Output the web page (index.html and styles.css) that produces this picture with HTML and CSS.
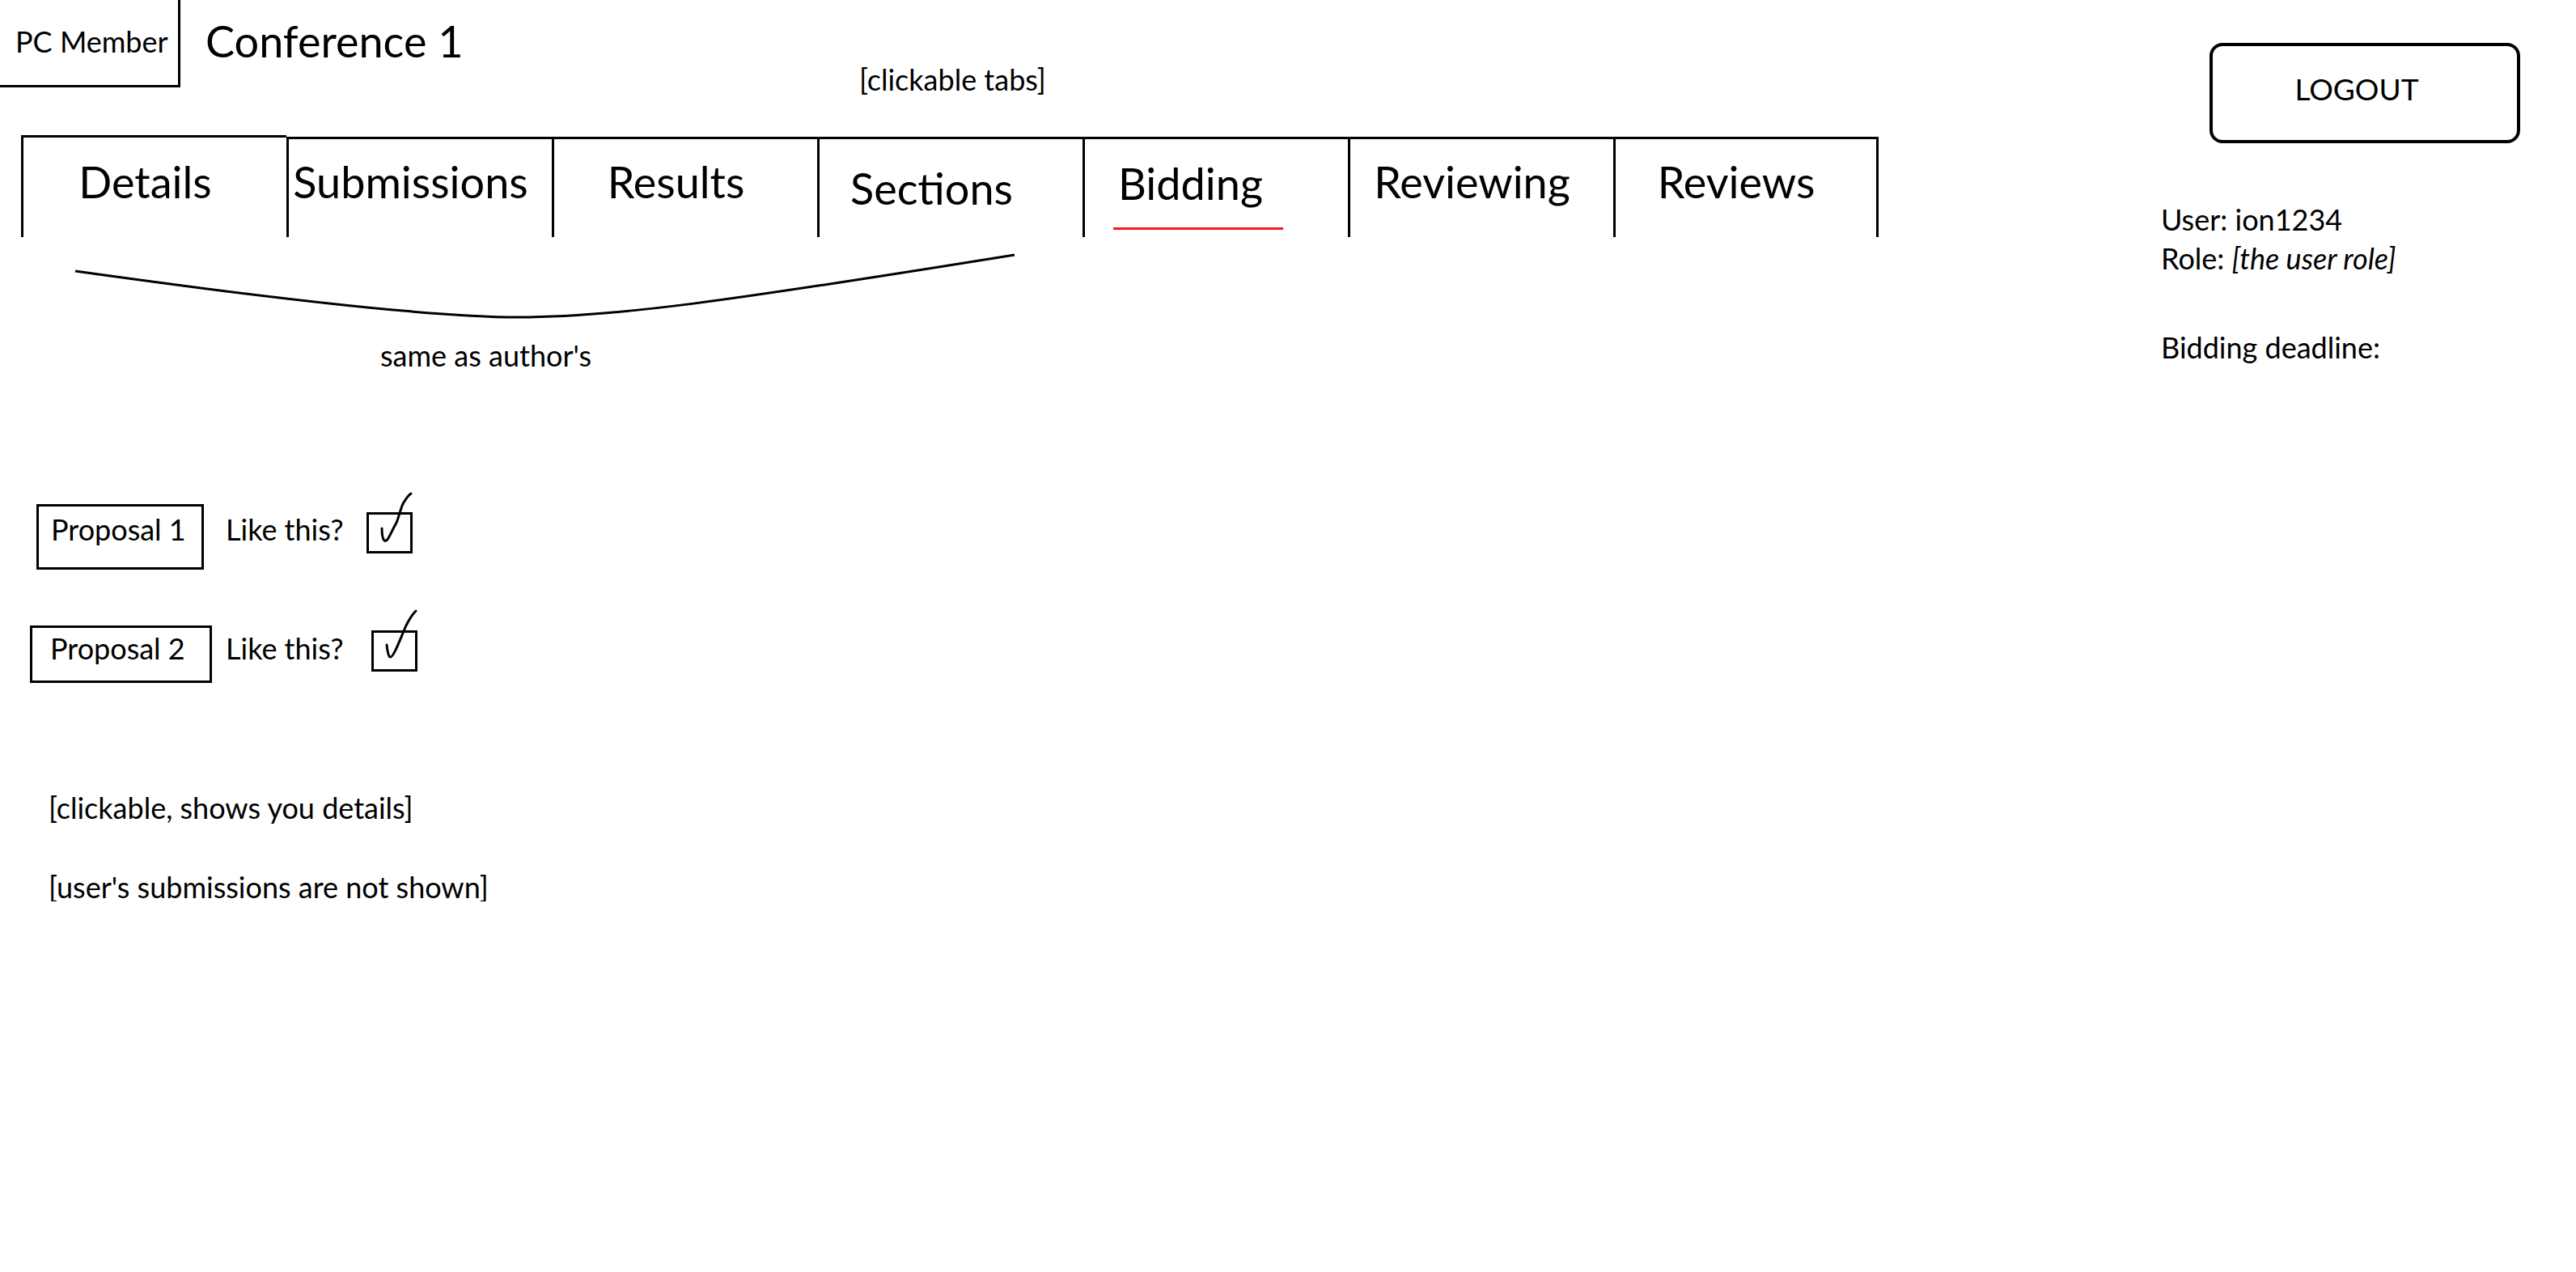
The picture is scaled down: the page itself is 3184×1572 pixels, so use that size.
FILE: index.html
```html
<!DOCTYPE html>
<html lang="en">

<head>
    <meta charset="UTF-8">
    <meta name="viewport" content="width=device-width, initial-scale=1.0">
    <title>Conference 1 - Bidding</title>
    <link rel="stylesheet" href="styles.css">
</head>

<body>
    <div class="page">
        <div class="main">
            <header class="top">
                <div class="role-box">PC Member</div>
                <h1 class="conf">Conference 1</h1>
                <span class="hint">[clickable tabs]</span>
            </header>

            <nav class="tabs">
                <a class="tab" href="#">Details</a>
                <a class="tab" href="#">Submissions</a>
                <a class="tab" href="#">Results</a>
                <a class="tab tab--low" href="#">Sections</a>
                <a class="tab active" href="#">Bidding<span class="mark"></span></a>
                <a class="tab" href="#">Reviewing</a>
                <a class="tab" href="#">Reviews</a>
            </nav>

            <div class="brace">
                <svg width="1300" height="100" viewBox="0 0 1300 100">
                    <path d="M93,35 C400,78 560,92 640,92 C760,92 900,72 1254,15" fill="none" stroke="#000" stroke-width="3" />
                </svg>
                <p>same as author's</p>
            </div>

            <ul class="bids">
                <li class="bid">
                    <a class="proposal" href="#">Proposal 1</a>
                    <span class="like">Like this?</span>
                    <span class="check">
                        <svg width="70" height="80" viewBox="0 0 70 80">
                            <path d="M19,50 C19,58 20,63 22,65 C26,68 30,55 37,43 C41,33 43,22 46,18 C49,13 52,9 55,7" fill="none" stroke="#000" stroke-width="3" stroke-linecap="round" />
                        </svg>
                    </span>
                </li>
                <li class="bid bid--wide">
                    <a class="proposal" href="#">Proposal 2</a>
                    <span class="like">Like this?</span>
                    <span class="check">
                        <svg width="70" height="80" viewBox="0 0 70 80">
                            <path d="M19,48 C20,57 21,62 23,63 C27,65 36,40 43,24 C47,16 51,10 55,6" fill="none" stroke="#000" stroke-width="3" stroke-linecap="round" />
                        </svg>
                    </span>
                </li>
            </ul>

            <div class="notes">
                <p>[clickable, shows you details]</p>
                <p>[user's submissions are not shown]</p>
            </div>
        </div>

        <aside class="side">
            <a class="logout" href="#">LOGOUT</a>
            <div class="info">
                <p>User: ion1234</p>
                <p>Role: <em>[the user role]</em></p>
            </div>
            <p class="deadline">Bidding deadline:</p>
        </aside>
    </div>
</body>

</html>
```

FILE: styles.css
```css
* {
    box-sizing: border-box;
}
body {
    margin: 0;
    font-family: Lato, "Liberation Sans", sans-serif;
    font-size: 36px;
    line-height: 1;
    color: #000;
    background: #fff;
}
p {
    margin: 0;
}
a {
    color: #000;
    text-decoration: none;
}
.page {
    display: flex;
}
.main {
    flex: 1;
}

/*--------------------------*/
.top {
    display: grid;
    grid-template-columns: 223px 839px auto;
    align-items: start;
    height: 169px;
}
.role-box {
    height: 108px;
    padding: 33px 0 0 19px;
    border-right: 3px solid #000;
    border-bottom: 3px solid #000;
    white-space: nowrap;
}
.conf {
    margin: 24px 0 0 31px;
    font-size: 54px;
    font-weight: normal;
    line-height: 1;
    white-space: nowrap;
}
.hint {
    margin-top: 80px;
    white-space: nowrap;
}

/*--------------------------*/
.tabs {
    display: flex;
    margin-left: 26px;
}
.tabs .tab {
    display: flex;
    flex-direction: column;
    align-items: center;
    width: 328px;
    height: 124px;
    padding: 26px 24px 0 0;
    border-top: 3px solid #000;
    border-left: 3px solid #000;
    font-size: 54px;
}
.tabs .tab:first-child {
    height: 126px;
    margin-top: -2px;
    padding-top: 28px;
}
.tabs .tab:last-child {
    border-right: 3px solid #000;
}
.tabs .tab--low {
    padding: 34px 48px 0 0;
}
.tabs .active {
    padding: 28px 64px 0 0;
}
.tabs .mark {
    width: 210px;
    height: 3px;
    margin: 27px -18px 0 0;
    background: #ed1c24;
}

/*--------------------------*/
.brace svg {
    display: block;
    margin-top: 7px;
}
.brace p {
    margin: 21px 0 0 470px;
}

/*--------------------------*/
.bids {
    list-style: none;
    margin: 166px 0 0;
    padding: 0;
}
.bid {
    display: flex;
    align-items: baseline;
}
.bid + .bid {
    margin-top: 69px;
}
.bid .proposal {
    width: 207px;
    height: 81px;
    margin-left: 45px;
    padding: 10px 0 0 15px;
    border: 3px solid #000;
    white-space: nowrap;
}
.bid .like {
    width: 174px;
    margin-left: 27px;
    white-space: nowrap;
}
.bid .check {
    position: relative;
    align-self: flex-start;
    width: 57px;
    height: 51px;
    margin-top: 10px;
    border: 3px solid #000;
}
.bid .check svg {
    position: absolute;
    left: -3px;
    top: -33px;
    overflow: visible;
}
.bid--wide .proposal {
    width: 225px;
    height: 71px;
    margin-left: 37px;
    padding: 7px 0 0 22px;
}
.bid--wide .like {
    width: 180px;
    margin-left: 17px;
}
.bid--wide .check {
    margin-top: 6px;
}

/*--------------------------*/
.notes {
    margin-top: 136px;
    padding-left: 60px;
}
.notes p + p {
    margin-top: 62px;
}

/*--------------------------*/
.side {
    width: 444px;
    margin-right: 69px;
    padding-top: 53px;
}
.logout {
    display: flex;
    align-items: center;
    justify-content: center;
    width: 384px;
    height: 124px;
    margin-left: 60px;
    padding: 0 20px 11px 0;
    border: 4px solid #000;
    border-radius: 16px;
    font-size: 37px;
}
.info {
    margin-top: 70px;
    line-height: 48px;
}
.deadline {
    margin-top: 62px;
    line-height: 48px;
}
```
